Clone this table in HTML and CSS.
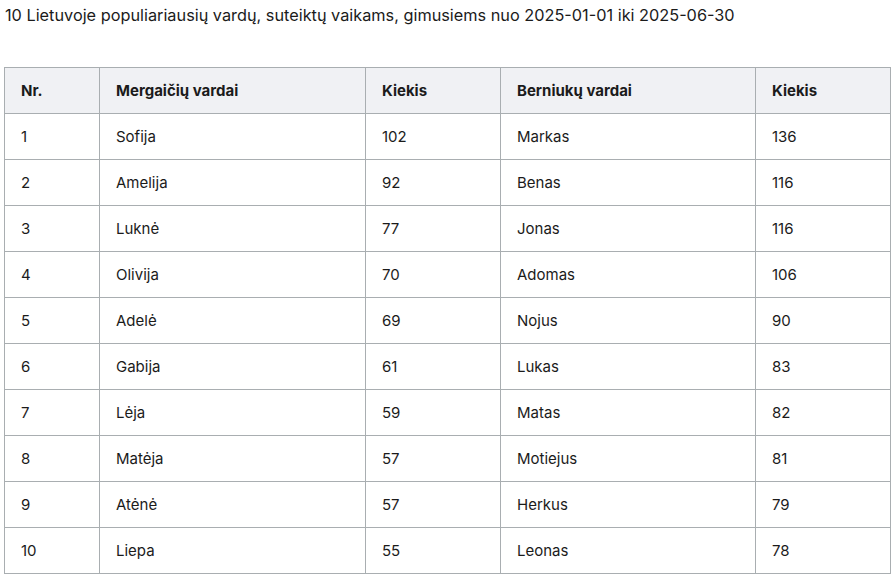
FILE: index.html
```html
<!DOCTYPE html>
<html lang="lt">
<head>
<meta charset="utf-8">
<link rel="stylesheet" href="styles.css">
</head>
<body>
<p class="title">10 Lietuvoje populiariausių vardų, suteiktų vaikams, gimusiems nuo 2025-01-01 iki 2025-06-30</p>
<table class="names">
<colgroup>
<col class="c1"><col class="c2"><col class="c3"><col class="c4"><col class="c5">
</colgroup>
<thead>
<tr><th>Nr.</th><th>Mergaičių vardai</th><th>Kiekis</th><th>Berniukų vardai</th><th>Kiekis</th></tr>
</thead>
<tbody>
<tr><td>1</td><td>Sofija</td><td>102</td><td>Markas</td><td>136</td></tr>
<tr><td>2</td><td>Amelija</td><td>92</td><td>Benas</td><td>116</td></tr>
<tr><td>3</td><td>Luknė</td><td>77</td><td>Jonas</td><td>116</td></tr>
<tr><td>4</td><td>Olivija</td><td>70</td><td>Adomas</td><td>106</td></tr>
<tr><td>5</td><td>Adelė</td><td>69</td><td>Nojus</td><td>90</td></tr>
<tr><td>6</td><td>Gabija</td><td>61</td><td>Lukas</td><td>83</td></tr>
<tr><td>7</td><td>Lėja</td><td>59</td><td>Matas</td><td>82</td></tr>
<tr><td>8</td><td>Matėja</td><td>57</td><td>Motiejus</td><td>81</td></tr>
<tr><td>9</td><td>Atėnė</td><td>57</td><td>Herkus</td><td>79</td></tr>
<tr><td>10</td><td>Liepa</td><td>55</td><td>Leonas</td><td>78</td></tr>
</tbody>
</table>
</body>
</html>
```
FILE: styles.css
```css
html, body {
  margin: 0;
  background: #ffffff;
}
body {
  padding: 0 2px 0 4px;
  font-family: "Inter", "Noto Sans", sans-serif;
  color: #1b1b1b;
}
.title {
  margin: 0;
  padding: 3px 0 0 1px;
  font-size: 16.3px;
  line-height: 24px;
}
.names {
  margin-top: 40px;
  border-collapse: collapse;
  width: 886px;
  font-size: 15px;
  table-layout: fixed;
}
.c1 { width: 95px; }
.c2 { width: 266px; }
.c3 { width: 135px; }
.c4 { width: 255px; }
.c5 { width: 135px; }
.names th,
.names td {
  border: 1px solid #a9aeb1;
  padding: 0 16px;
  height: 45px;
  text-align: left;
  vertical-align: middle;
  line-height: 22px;
}
.names th {
  background: #f0f1f4;
  font-weight: 700;
}
```
